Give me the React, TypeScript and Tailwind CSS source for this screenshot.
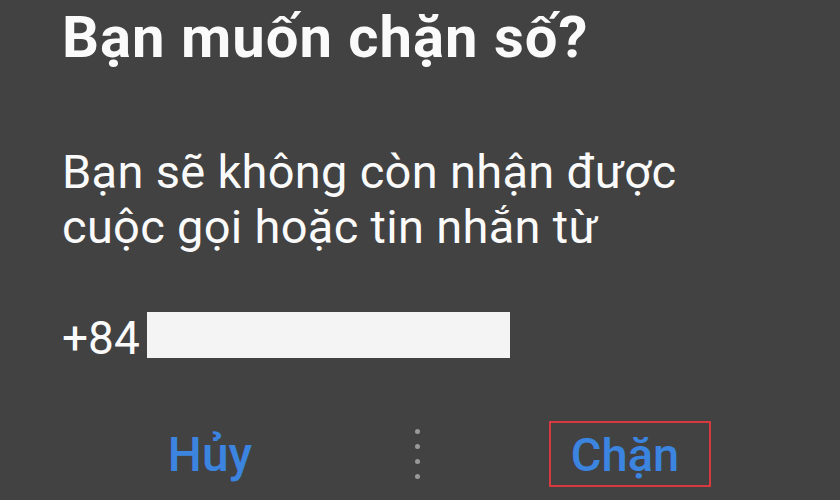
import React from "react";

export default function App() {
  return (
    <div
      className="w-[840px] h-[500px] bg-[#424242] overflow-hidden flex flex-col text-[#fafafa]"
      style={{ fontFamily: "Roboto, 'Noto Sans', sans-serif" }}
    >
      <div className="pl-[62px] pt-[5px]">
        <h1 className="text-[58px] leading-[64px] font-bold tracking-[1px]">Bạn muốn chặn số?</h1>
      </div>
      <div className="pl-[62px] mt-[75px] text-[47px] leading-[55px] tracking-[0.3px]">
        <p>Bạn sẽ không còn nhận được</p>
        <p>cuộc gọi hoặc tin nhắn từ</p>
      </div>
      <div className="pl-[62px] mt-[57px] flex items-start text-[46px] leading-[55px]">
        <span>+84</span>
        <div className="ml-[7px] mt-[1px] w-[363px] h-[46px] bg-[#f4f4f4]" />
      </div>
      <div className="mt-[55px] flex items-center h-[66px]">
        <div className="w-[420px] flex justify-center">
          <button className="text-[48px] leading-[55px] font-medium text-[#3b84e0]">Hủy</button>
        </div>
        <div className="w-[5px] -ml-[5px] flex flex-col items-center gap-[10px]">
          <span className="w-[5px] h-[5px] rounded-full bg-[#999999]" />
          <span className="w-[5px] h-[5px] rounded-full bg-[#999999]" />
          <span className="w-[5px] h-[5px] rounded-full bg-[#999999]" />
          <span className="w-[5px] h-[5px] rounded-full bg-[#999999]" />
        </div>
        <div className="flex-1 flex justify-center">
          <div className="w-[162px] h-[66px] border-2 border-[#d8393f] flex items-center justify-center pr-[10px]">
            <button className="text-[47px] leading-[55px] font-medium text-[#3b84e0]">Chặn</button>
          </div>
        </div>
      </div>
    </div>
  );
}
